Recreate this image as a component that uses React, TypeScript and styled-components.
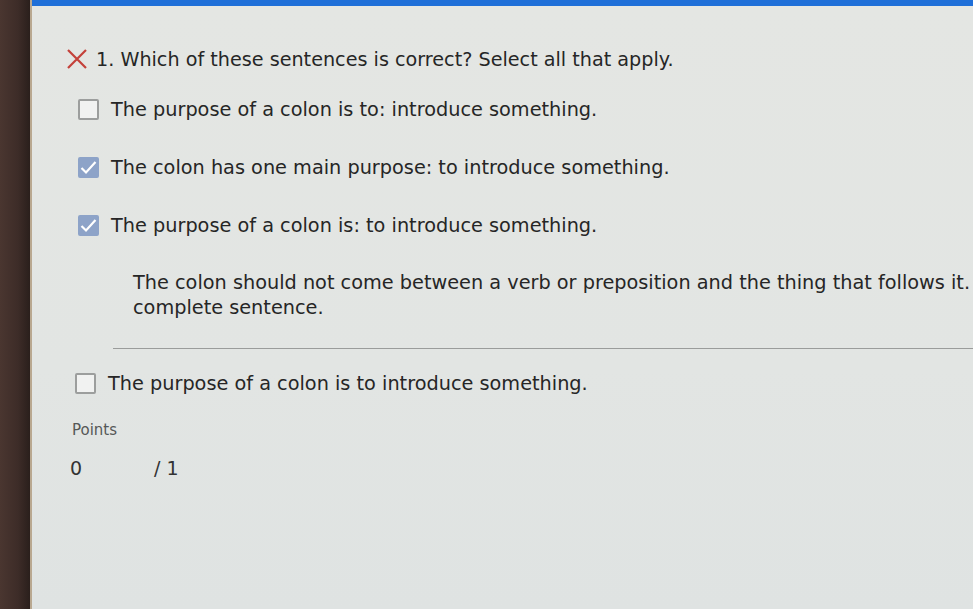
import React from "react";
import styled, { createGlobalStyle } from "styled-components";

const Global = createGlobalStyle`
  html, body { margin: 0; padding: 0; overflow: hidden; background: #e3e5e2; }
  body { font-family: "DejaVu Sans", Verdana, sans-serif; }
`;

const Frame = styled.div`
  display: flex;
  width: 973px;
  height: 609px;
  overflow: hidden;
`;

const Bezel = styled.div`
  width: 30px;
  flex: none;
  background: linear-gradient(90deg, #4a3630 0%, #3d2c28 60%, #2a1f1c 100%);
  border-right: 2px solid #b9a890;
`;

const Screen = styled.div`
  flex: 1;
  min-width: 0;
  background: linear-gradient(180deg, #e4e6e3 0%, #e2e5e3 60%, #dfe3e2 100%);
  border-top: 6px solid #1f6fd8;
  padding: 41px 0 0 34px;
  overflow: hidden;
`;

const Header = styled.div`
  display: flex;
  align-items: center;
  gap: 8px;
  height: 24px;
  font-size: 19.2px;
  color: #262626;
  white-space: nowrap;
`;

const Options = styled.div`
  display: flex;
  flex-direction: column;
  gap: 34px;
  margin: 26px 0 0 12px;
`;

const Row = styled.label`
  display: flex;
  align-items: center;
  gap: 12px;
  height: 24px;
  font-size: 19.3px;
  color: #262626;
  white-space: nowrap;
`;

const Box = styled.span<{ $checked?: boolean }>`
  width: 21px;
  height: 21px;
  box-sizing: border-box;
  flex: none;
  border-radius: 2px;
  display: flex;
  align-items: center;
  justify-content: center;
  background: ${(p) => (p.$checked ? "#8da3c8" : "#f1f2f1")};
  border: 2px solid ${(p) => (p.$checked ? "#8da3c8" : "#9c9e9d")};
`;

const Feedback = styled.div`
  margin: 33px 0 0 67px;
  font-size: 19.3px;
  line-height: 25px;
  color: #262626;
  white-space: nowrap;
`;

const Rule = styled.div`
  margin: 28px 0 0 47px;
  height: 1px;
  background: #9a9c9b;
`;

const LastOption = styled.div`
  margin: 22px 0 0 9px;
`;

const PointsLabel = styled.div`
  margin: 26px 0 0 6px;
  font-size: 15px;
  line-height: 18px;
  color: #555857;
`;

const Score = styled.div`
  display: flex;
  margin: 17px 0 0 4px;
  font-size: 19px;
  line-height: 24px;
  color: #333;
`;

const ScoreValue = styled.span`
  width: 84px;
`;

const Check = () => (
  <svg width="17" height="15" viewBox="0 0 17 15">
    <path d="M1.5 8 L6 12.5 L15.5 2" fill="none" stroke="#fff" strokeWidth="2.2" />
  </svg>
);

const Cross = () => (
  <svg width="22" height="22" viewBox="0 0 22 22">
    <path d="M2 2 L20 20 M20 2 L2 20" stroke="#c4413a" strokeWidth="2.2" />
  </svg>
);

const Option = ({ checked, text }: { checked?: boolean; text: string }) => (
  <Row>
    <Box $checked={checked}>{checked && <Check />}</Box>
    <span>{text}</span>
  </Row>
);

export default function App() {
  return (
    <Frame>
      <Global />
      <Bezel />
      <Screen>
        <Header>
          <Cross />
          <span>1. Which of these sentences is correct? Select all that apply.</span>
        </Header>
        <Options>
          <Option text="The purpose of a colon is to: introduce something." />
          <Option checked text="The colon has one main purpose: to introduce something." />
          <Option checked text="The purpose of a colon is: to introduce something." />
        </Options>
        <Feedback>
          <div>The colon should not come between a verb or preposition and the thing that follows it.</div>
          <div>complete sentence.</div>
        </Feedback>
        <Rule />
        <LastOption>
          <Option text="The purpose of a colon is to introduce something." />
        </LastOption>
        <PointsLabel>Points</PointsLabel>
        <Score>
          <ScoreValue>0</ScoreValue>
          <span>/ 1</span>
        </Score>
      </Screen>
    </Frame>
  );
}
